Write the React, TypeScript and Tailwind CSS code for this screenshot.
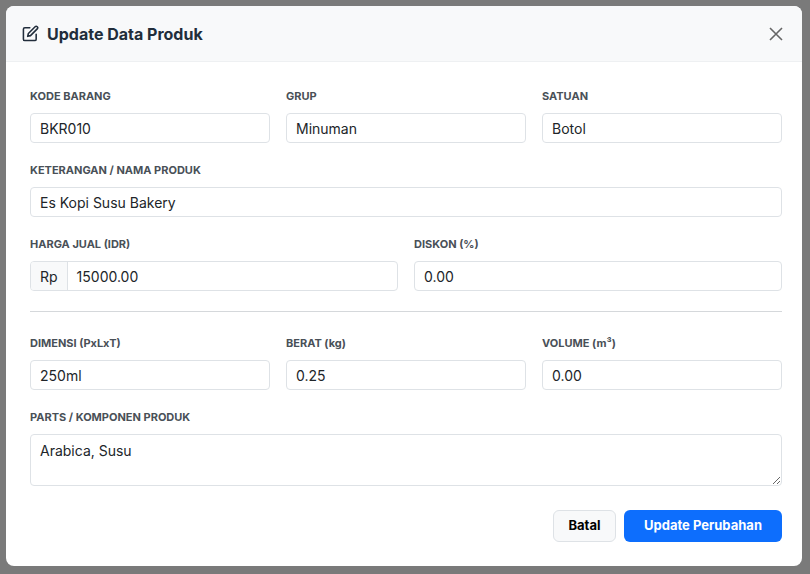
import React from "react";

const L = ({ children }: { children: React.ReactNode }) => (
  <div className="text-[11px] font-bold text-[#495057] h-[13px] leading-[13px] mb-[10px]">{children}</div>
);
const I = ({ v }: { v: string }) => (
  <div className="h-[30px] border border-[#dee2e6] rounded-[4px] px-[9px] flex items-center text-[14px] text-[#212529]">{v}</div>
);

export default function App() {
  return (
    <div className="w-[810px] h-[574px] bg-[#7a7a7a] p-[6px] pr-[8px] overflow-hidden" style={{ fontFamily: "Inter, sans-serif" }}>
      <div className="bg-white rounded-[8px] h-[560px] overflow-hidden flex flex-col">
        <div className="h-[56px] bg-[#f8f9fa] border-b border-[#eef0f2] flex items-center px-[16px] justify-between">
          <div className="flex items-center gap-[8px] text-[#212d3b]">
            <svg width="17" height="17" viewBox="0 0 24 24" fill="none" stroke="currentColor" strokeWidth="2.2" strokeLinecap="round" strokeLinejoin="round">
              <path d="M11 4H4a2 2 0 0 0-2 2v14a2 2 0 0 0 2 2h14a2 2 0 0 0 2-2v-7" />
              <path d="M18.5 2.5a2.1 2.1 0 0 1 3 3L12 15l-4 1 1-4 9.5-9.5z" />
            </svg>
            <span className="text-[16px] font-bold">Update Data Produk</span>
          </div>
          <svg width="16" height="16" viewBox="0 0 16 16" stroke="#666" strokeWidth="1.6" className="mr-[2px]">
            <path d="M2 2l12 12M14 2L2 14" />
          </svg>
        </div>
        <div className="pl-[24px] pr-[20px] pt-[28px] flex flex-col">
          <div className="grid grid-cols-3 gap-[16px]">
            <div><L>KODE BARANG</L><I v="BKR010" /></div>
            <div><L>GRUP</L><I v="Minuman" /></div>
            <div><L>SATUAN</L><I v="Botol" /></div>
          </div>
          <div className="mt-[21px]"><L>KETERANGAN / NAMA PRODUK</L><I v="Es Kopi Susu Bakery" /></div>
          <div className="grid grid-cols-2 gap-[16px] mt-[21px]">
            <div>
              <L>HARGA JUAL (IDR)</L>
              <div className="h-[30px] border border-[#dee2e6] rounded-[4px] flex text-[14px] text-[#212529] overflow-hidden">
                <div className="bg-[#f8f9fa] border-r border-[#dee2e6] px-[9px] flex items-center">Rp</div>
                <div className="px-[9px] flex items-center">15000.00</div>
              </div>
            </div>
            <div><L>DISKON (%)</L><I v="0.00" /></div>
          </div>
          <div className="h-px bg-[#d5d8db] mt-[20px]" />
          <div className="grid grid-cols-3 gap-[16px] mt-[25px]">
            <div><L>DIMENSI (PxLxT)</L><I v="250ml" /></div>
            <div><L>BERAT (kg)</L><I v="0.25" /></div>
            <div><L>VOLUME (m³)</L><I v="0.00" /></div>
          </div>
          <div className="mt-[21px]">
            <L>PARTS / KOMPONEN PRODUK</L>
            <textarea readOnly defaultValue="Arabica, Susu" className="w-full h-[52px] border border-[#dee2e6] rounded-[4px] px-[9px] py-[5px] text-[14px] text-[#212529] outline-none block" style={{ fontFamily: "Inter, sans-serif" }} />
          </div>
          <div className="flex justify-end gap-[8px] mt-[24px]">
            <div className="h-[32px] w-[63px] border border-[#dee2e6] bg-[#f8f9fa] rounded-[6px] flex items-center justify-center text-[13px] font-bold text-black">Batal</div>
            <div className="h-[32px] w-[158px] bg-[#0d6efd] rounded-[6px] flex items-center justify-center text-[13px] font-bold text-white">Update Perubahan</div>
          </div>
        </div>
      </div>
    </div>
  );
}
